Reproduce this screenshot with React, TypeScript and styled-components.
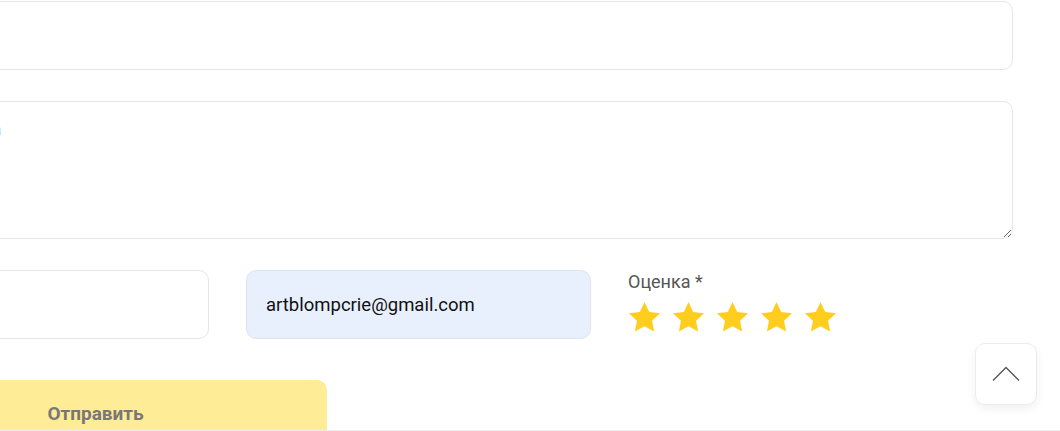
import React from "react";
import styled, { createGlobalStyle } from "styled-components";

const Global = createGlobalStyle`
  html, body { margin: 0; padding: 0; background: #fff; overflow: hidden; }
  body { font-family: Roboto, "Noto Sans", Arial, sans-serif; }
  * { box-sizing: border-box; }
`;

const Page = styled.div`
  height: 431px;
  overflow: hidden;
  border-bottom: 1px solid #ececec;
`;

const Form = styled.form`
  margin-left: -136px;
  width: 1149px;
  padding-top: 1px;
  display: flex;
  flex-direction: column;
`;

const Field = styled.input<{ $filled?: boolean }>`
  height: 69px;
  width: 100%;
  border: 1px solid ${(p) => (p.$filled ? "#dde5f3" : "#e6e6e6")};
  border-radius: 10px;
  background: ${(p) => (p.$filled ? "#e8f0fe" : "#fff")};
  padding: 0 19px;
  font-family: Roboto, sans-serif;
  font-size: 18.5px;
  color: #111;
  outline: none;
`;

const TextArea = styled.textarea`
  margin-top: 31px;
  height: 138px;
  width: 100%;
  border: 1px solid #e6e6e6;
  border-radius: 10px;
  padding: 17px 20px 18px 29px;
  font-family: Roboto, sans-serif;
  font-size: 17px;
  color: #5a6ad0;
  resize: vertical;
  outline: none;
`;

const Row = styled.div`
  margin-top: 31px;
  display: grid;
  grid-template-columns: 345px 345px 1fr;
  column-gap: 37px;
  align-items: start;
`;

const Rating = styled.div`
  display: flex;
  flex-direction: column;
`;

const Label = styled.div`
  font-size: 18px;
  line-height: 24px;
  color: #555;
`;

const Stars = styled.div`
  display: flex;
  gap: 11px;
  margin-top: 7px;
`;

const Button = styled.button`
  margin-top: 41px;
  width: 463px;
  height: 66px;
  border: none;
  border-radius: 10px;
  background: #feec96;
  color: #787878;
  font-family: Roboto, sans-serif;
  font-weight: 700;
  font-size: 19px;
  padding: 0;
  align-self: flex-start;
`;

const ToTop = styled.button`
  position: fixed;
  right: 23px;
  bottom: 26px;
  width: 62px;
  height: 62px;
  border: 1px solid #ececec;
  border-radius: 10px;
  background: #fff;
  box-shadow: 0 4px 10px rgba(0, 0, 0, 0.06);
  display: flex;
  align-items: center;
  justify-content: center;
  padding: 0;
`;

const Star = () => (
  <svg width="33" height="32" viewBox="0 0 24 23">
    <path
      d="M12 0.6l3.4 7.2 7.9 1-5.8 5.4 1.5 7.8L12 18.2l-7 3.8 1.5-7.8L0.7 8.8l7.9-1z"
      fill="#ffcd1e"
    />
  </svg>
);

export default function App() {
  return (
    <Page>
      <Global />
      <Form onSubmit={(e) => e.preventDefault()}>
        <Field type="text" />
        <TextArea defaultValue="Текст отзыва" />
        <Row>
          <Field type="text" />
          <Field type="email" $filled defaultValue="artblompcrie@gmail.com" />
          <Rating>
            <Label>Оценка *</Label>
            <Stars>
              {[0, 1, 2, 3, 4].map((i) => (
                <Star key={i} />
              ))}
            </Stars>
          </Rating>
        </Row>
        <Button type="submit">Отправить</Button>
      </Form>
      <ToTop type="button" aria-label="Наверх">
        <svg width="28" height="16" viewBox="0 0 28 16">
          <path d="M1 14.5L14 1.5l13 13" fill="none" stroke="#555" strokeWidth="1.3" />
        </svg>
      </ToTop>
    </Page>
  );
}
